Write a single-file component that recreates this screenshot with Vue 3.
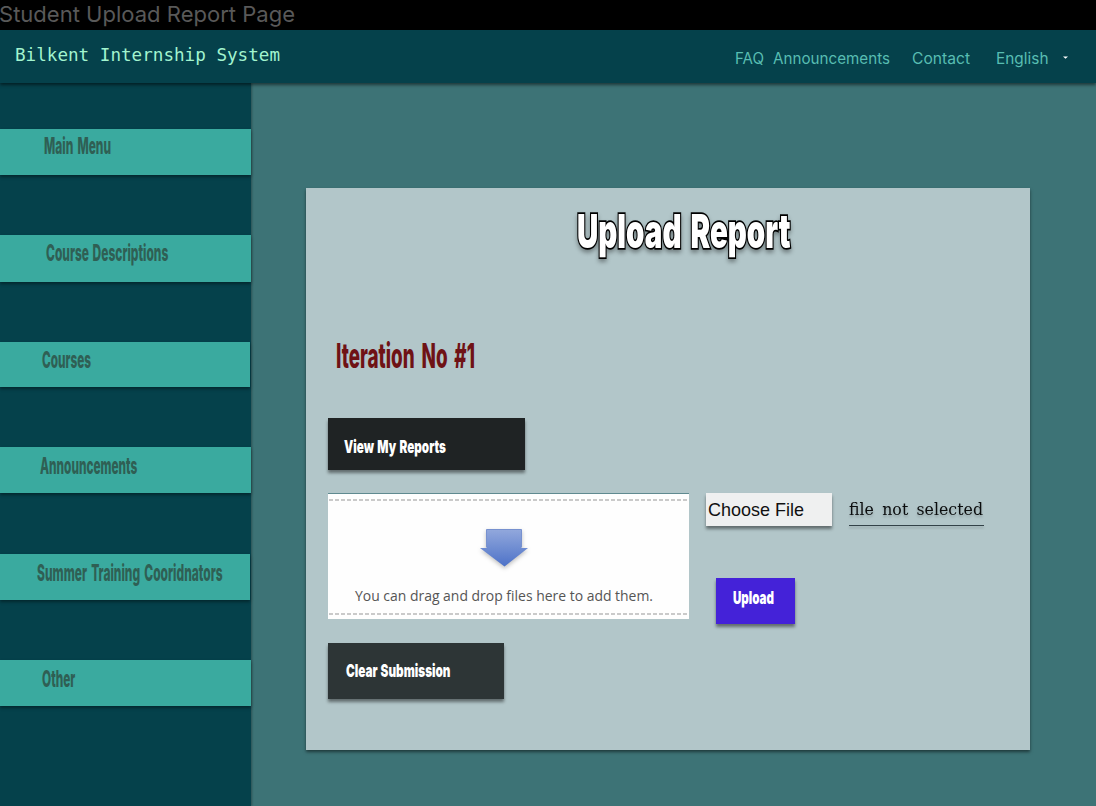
<script setup>
import { h } from 'vue'

const menu = [
  { label: 'Main Menu', x: 44.2, w: 67, gap: 3, b: 24.8, cls: 'm1' },
  { label: 'Course Descriptions', x: 46.2, w: 122.3, gap: 2, b: 26, cls: 'm2' },
  { label: 'Courses', x: 41.7, w: 49, b: 26, cls: 'm3' },
  { label: 'Announcements', x: 39.7, w: 97.3, b: 26.5, cls: 'm4' },
  { label: 'Summer Training Cooridnators', x: 37.2, w: 185.6, gap: 3, b: 26.6, cls: 'm5' },
  { label: 'Other', x: 41.7, w: 33.3, b: 26.5, cls: 'm6' },
]

// A line of text fitted to a fixed width; the box is `b` tall and its bottom is the baseline.
// `gap` widens the spaces between words.
const FitText = (p) =>
  h('svg', { width: p.w, height: p.b, class: 'fit' }, [
    h('text', { x: 0, y: p.b, 'font-size': p.size, 'word-spacing': p.gap || 0, textLength: p.w, lengthAdjust: 'spacingAndGlyphs' }, p.text),
  ])
FitText.props = ['text', 'w', 'b', 'size', 'gap']
</script>

<template>
  <div class="page">
    <div class="frame-title"><FitText text="Student Upload Report Page" :w="296" :b="22" :size="22" /></div>
    <header class="top">
      <FitText class="brand" text="Bilkent Internship System" :w="265" :b="31" :size="18.5" />
      <nav class="nav">
        <FitText class="faq" text="FAQ" :w="29" :b="34" :size="15.5" />
        <FitText class="ann" text="Announcements" :w="117" :b="34" :size="15.5" />
        <FitText class="con" text="Contact" :w="58" :b="34" :size="15.5" />
        <FitText class="eng" text="English" :w="52.5" :b="34" :size="15.5" />
        <svg class="caret" width="5" height="3"><path d="M0 0.5H5L2.5 2.8Z" fill="#fff" /></svg>
      </nav>
    </header>
    <div class="body">
      <aside class="side">
        <div v-for="m in menu" :key="m.cls" class="item" :class="m.cls">
          <FitText :text="m.label" :w="m.w" :gap="m.gap" :b="m.b" :size="23.2" :style="{ marginLeft: m.x + 'px' }" />
        </div>
      </aside>
      <main class="main">
        <section class="panel">
          <h1 class="title"><FitText text="Upload Report" :w="213.5" :b="60.2" :size="47" :gap="5" /></h1>
          <h2 class="iter"><FitText text="Iteration No #1" :w="139" :b="27" :size="34.5" :gap="5" /></h2>
          <button class="btn view"><FitText text="View My Reports" :w="102" :b="35" :size="18" :gap="1.5" /></button>
          <div class="row">
            <div class="drop">
              <svg class="dash" width="361" height="2"><path d="M1 1H361" /></svg>
              <svg class="arrow" width="56" height="48" viewBox="0 0 56 48">
                <defs>
                  <linearGradient id="blue" x1="0" y1="0" x2="0" y2="1">
                    <stop offset="0" stop-color="#92a8dc" /><stop offset="1" stop-color="#4d72c8" />
                  </linearGradient>
                </defs>
                <path d="M10.5 4.5H45.5V23H52L28.5 41.5L4 23H10.5Z" fill="url(#blue)" />
                <path d="M10.5 22V4.5H45.5V22" fill="none" stroke="#7791cf" stroke-width="1" />
              </svg>
              <FitText class="hint" text="You can drag and drop files here to add them." :w="298" :b="26" :size="14.5" />
              <svg class="dash low" width="361" height="2"><path d="M1 1H361" /></svg>
            </div>
            <div class="pick">
              <div class="file">
                <button class="btn choose"><FitText text="Choose File" :w="96" :b="23" :size="18.5" /></button>
                <div class="none">
                  <FitText text="file not selected" :w="134" :b="21.5" :size="17" :gap="3.5" />
                </div>
              </div>
              <button class="btn upload"><FitText text="Upload" :w="41" :b="26" :size="18" /></button>
            </div>
          </div>
          <button class="btn clear"><FitText text="Clear Submission" :w="104.5" :b="34" :size="18" :gap="1" /></button>
        </section>
      </main>
    </div>
  </div>
</template>

<style>
html, body { margin: 0; background: #000; overflow: hidden; }
.fit { display: block; overflow: visible; flex: none; fill: currentColor; }
</style>
<style scoped>
.page { width: 1096px; height: 806px; overflow: hidden; display: flex; flex-direction: column; font-family: Inter, sans-serif; background: #000; }
.frame-title { height: 30px; margin-left: -1.5px; color: #595959; flex: none; }
.top { height: 53px; flex: none; display: flex; justify-content: space-between; background: #05414b; box-shadow: 0 2px 3px rgba(0,0,0,.5); position: relative; z-index: 2; }
.brand { margin-left: 15px; color: #a2f4cf; font-family: "DejaVu Sans Mono", monospace; }
.nav { display: flex; width: 361.4px; color: #58bdb2; }
.ann { margin-left: 9.5px; }
.con { margin-left: 22.3px; }
.eng { margin-left: 25.5px; }
.caret { margin: 26px 0 0 14.6px; }
.body { flex: 1; display: flex; min-height: 0; }
.side { width: 251.3px; flex: none; background: #05414b; box-shadow: 1px 0 2px rgba(0,0,0,.3); display: flex; flex-direction: column; position: relative; z-index: 1; }
.item { flex: none; background: #3aaa9f; color: #2f5f54; font-weight: 800; box-shadow: 0 2px 3px rgba(0,0,0,.4); }
.m1 { height: 46px; margin-top: 45.7px; }
.m2 { height: 46.7px; margin-top: 60.3px; }
.m3 { height: 45px; margin-top: 60.3px; width: 250px; }
.m4 { height: 46px; margin-top: 60.3px; }
.m5 { height: 45.5px; margin-top: 61px; width: 250px; }
.m6 { height: 46px; margin-top: 60.3px; }
.main { flex: 1; background: #3d7376; padding: 105px 0 0 54.7px; }
.panel { box-sizing: border-box; width: 724px; height: 562px; background: #b2c6c9; padding-left: 22px; box-shadow: 0 2px 3px rgba(0,0,0,.5); display: flex; flex-direction: column; align-items: flex-start; }
.title { margin: 0 0 0 249.5px; height: 126px; color: #fff; font-weight: 900; stroke: #000; stroke-width: 3.5px; stroke-linejoin: miter; paint-order: stroke; filter: drop-shadow(0 3px 2px rgba(0,0,0,.35)); }
.iter { margin: 27px 0 0 8.5px; height: 77px; color: #6f1215; font-weight: 800; }
.btn { border: 0; border-radius: 0; padding: 0; margin: 0; display: flex; align-items: flex-start; font-family: Inter, sans-serif; font-weight: 900; color: #fff; box-shadow: 0 3px 3px rgba(0,0,0,.45); }
.view { width: 197px; height: 52px; background: #1f2324; padding-left: 16.3px; }
.row { display: flex; margin-top: 22.5px; height: 126.5px; }
.drop { box-sizing: border-box; width: 361px; height: 126.5px; background: #fefefe; border-top: 1.5px solid #5f8a90; display: flex; flex-direction: column; align-items: center; }
.dash { margin-top: 5.5px; flex: none; stroke: #b9b9b9; stroke-width: 1.5; stroke-dasharray: 4 2; }
.arrow { margin: 23.5px 0 0 -9px; flex: none; filter: drop-shadow(0 2px 2px rgba(0,0,0,.25)); }
.hint { margin: 2px 0 0 -9px; color: #555; font-family: "Open Sans", sans-serif; }
.low { margin-top: 12.5px; }
.pick { margin-left: 17.3px; }
.file { display: flex; }
.choose { width: 126px; height: 33px; background: #eff0f0; color: #111; font-family: "Liberation Sans", Arial, sans-serif; font-weight: 400; padding-left: 2px; }
.none { box-sizing: border-box; margin-left: 16.3px; width: 135.5px; height: 33px; border-bottom: 1px solid #334248; display: flex; color: #0b0d0e; font-family: "DejaVu Serif", serif; filter: drop-shadow(0 2px 1px rgba(0,0,0,.2)); }
.upload { margin: 52px 0 0 10px; width: 79px; height: 46px; background: #4422d8; padding-left: 17px; }
.clear { margin-top: 24.3px; width: 176px; height: 56px; background: #2d3536; padding-left: 18px; }
</style>
